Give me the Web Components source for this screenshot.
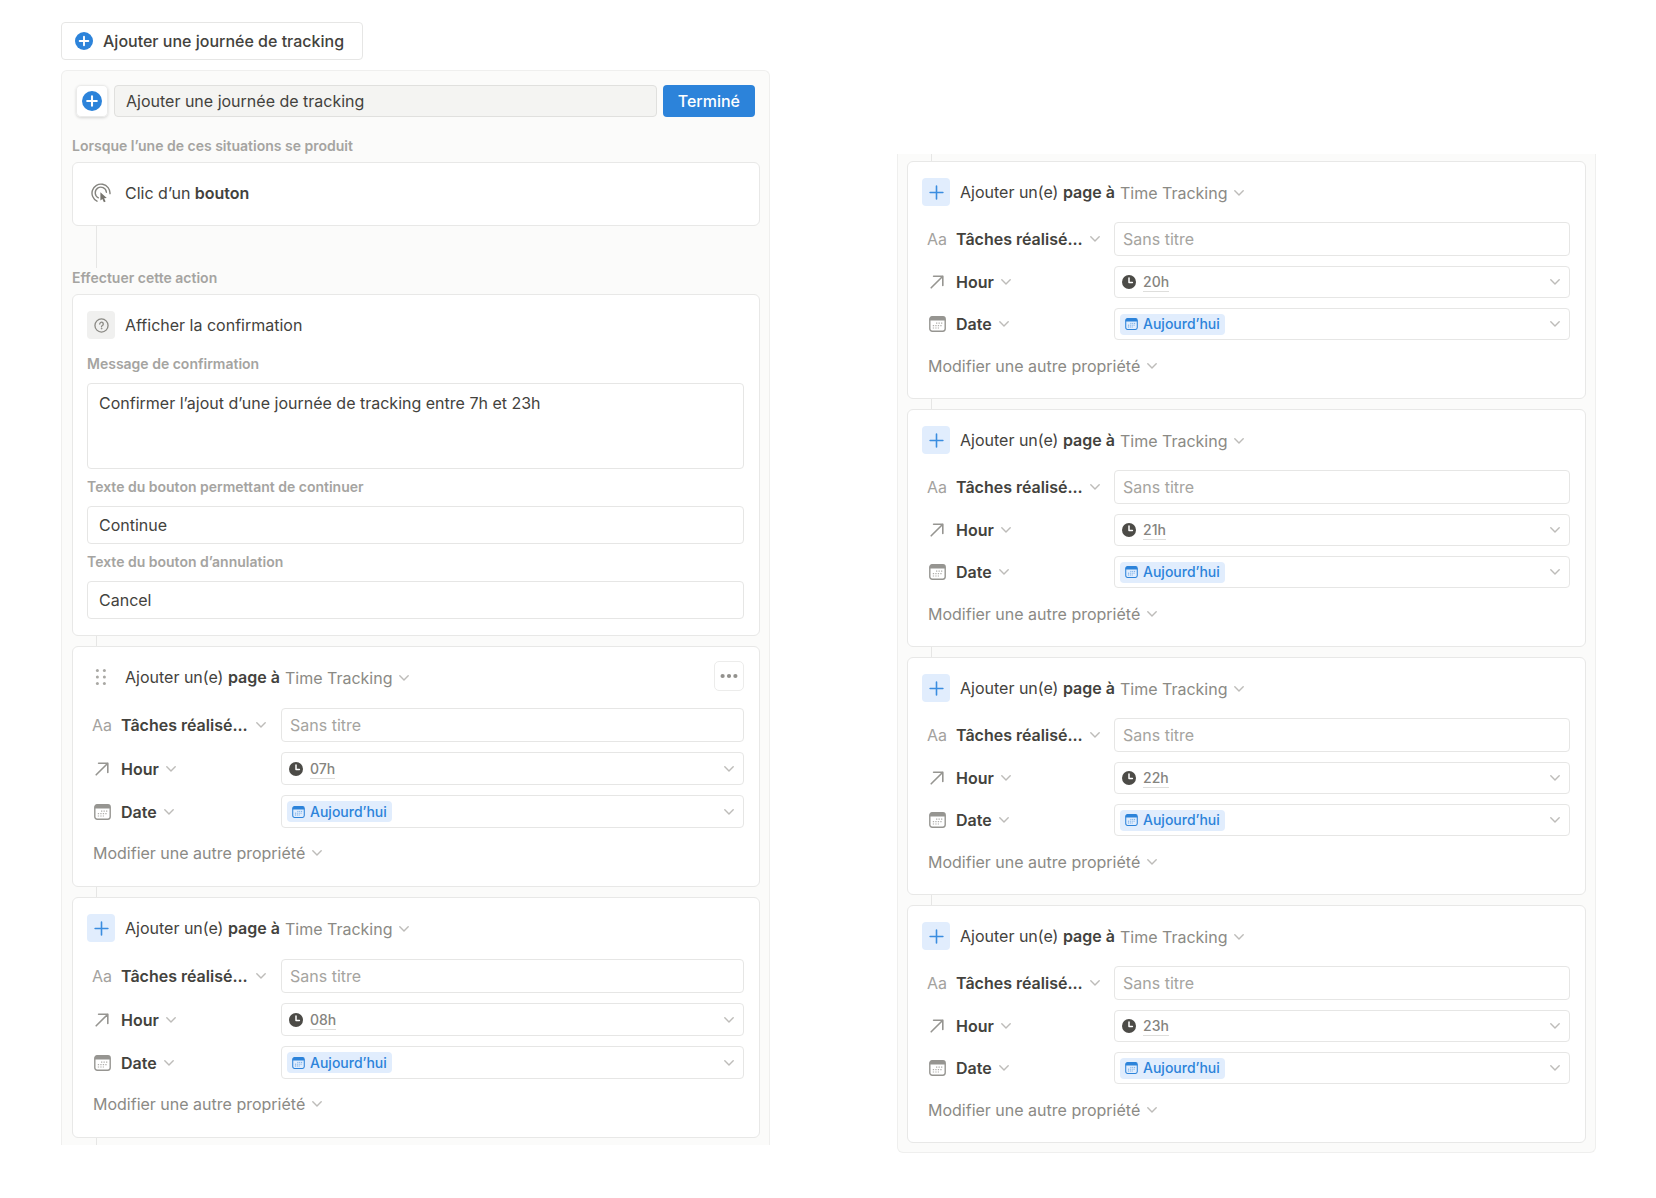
<!DOCTYPE html>
<html lang="fr">
<head>
<meta charset="utf-8">
<title>Ajouter une journée de tracking</title>
<style>
  body {
    margin: 0;
    background: #fff;
    color: #43423d;
    font: 400 16px/24px Inter, "Liberation Sans", sans-serif;
  }
</style>
</head>
<body>
<tracking-board></tracking-board>

<script>
const ICONS = {
  plusDisc: `<svg viewBox="0 0 20 20"><circle cx="10" cy="10" r="10" fill="#2c83da"/><path d="M10 5.2v9.6M5.2 10h9.6" stroke="#fff" stroke-width="2.1" stroke-linecap="round"/></svg>`,
  plus: `<svg viewBox="0 0 16 16" fill="none" stroke="#3a8de0" stroke-width="1.7" stroke-linecap="round"><path d="M8 1.2v13.6M1.2 8h13.6"/></svg>`,
  click: `<svg viewBox="0 0 20 20" fill="none" stroke="#85847f" stroke-width="1.4" stroke-linecap="round"><path d="M6 18.2A9 9 0 1 1 19 10.6"/><path d="M7.4 14.8A5.6 5.6 0 1 1 15.4 9.2"/><path d="M9.4 9.2v8.4l2-1.7 1.5 3.4 1.7-.8-1.5-3.2 2.7-.2z" fill="#77756f" stroke="none"/></svg>`,
  question: `<svg viewBox="0 0 16 16" fill="none" stroke="#8b8a85" stroke-width="1.4" stroke-linecap="round"><circle cx="8" cy="8" r="7"/><path d="M6.1 6.4A1.9 1.9 0 1 1 9 8c-.7.4-1 .7-1 1.3"/><circle cx="8" cy="11.4" r=".4" fill="#8b8a85" stroke-width=".8"/></svg>`,
  drag: `<svg viewBox="0 0 12 18" fill="#a9a8a4"><circle cx="2.4" cy="2.5" r="1.5"/><circle cx="9.4" cy="2.5" r="1.5"/><circle cx="2.4" cy="9" r="1.5"/><circle cx="9.4" cy="9" r="1.5"/><circle cx="2.4" cy="15.5" r="1.5"/><circle cx="9.4" cy="15.5" r="1.5"/></svg>`,
  dots: `<svg viewBox="0 0 18 6" fill="#92918d"><circle cx="2.6" cy="3" r="2.1"/><circle cx="9" cy="3" r="2.1"/><circle cx="15.4" cy="3" r="2.1"/></svg>`,
  chevron: `<svg viewBox="0 0 10 6" fill="none" stroke="#bdbcb9" stroke-width="1.4" stroke-linecap="round" stroke-linejoin="round"><path d="M.8.8 5 5 9.2.8"/></svg>`,
  arrow: `<svg viewBox="0 0 14 14" fill="none" stroke="#969591" stroke-width="1.6" stroke-linecap="round" stroke-linejoin="round"><path d="M1.2 12.8 12.8 1.2M3.6 1.2h9.2v9.2"/></svg>`,
  calendar: `<svg viewBox="0 0 17 16"><rect x=".8" y=".8" width="15.4" height="14.4" rx="2.4" fill="none" stroke="currentColor" stroke-width="1.4"/><path d="M.8 4.6V3A2.4 2.4 0 0 1 3.2.6h10.6A2.4 2.4 0 0 1 16.2 3v1.6z" fill="currentColor"/><path d="M7 7.2h6.4M3.8 9.6h9.6M3.8 12h6.2" stroke="currentColor" stroke-width="1.2" stroke-dasharray="1.3 1.2" opacity=".75"/></svg>`,
  clock: `<svg viewBox="0 0 14 14"><circle cx="7" cy="7" r="7" fill="#4c4b47"/><path d="M7 3v4.4h3.4" fill="none" stroke="#fff" stroke-width="1.5" stroke-linecap="round" stroke-linejoin="round"/></svg>`
};

const BASE = `
  *, *::before, *::after { box-sizing: border-box; }
  button, input, textarea, select { font: inherit; color: inherit; margin: 0; }
  button, select { appearance: none; background: none; border: 0; padding: 0; cursor: pointer; }
`;

class Base extends HTMLElement {
  connectedCallback() {
    if (this.shadowRoot) return;
    this.attachShadow({ mode: "open" }).innerHTML = `<style>${BASE}</style>${this.view()}`;
  }
}

customElements.define("ui-icon", class extends Base {
  view() {
    return `<style>
      :host { display: block; flex: none; width: var(--w, 16px); height: var(--h, var(--w, 16px)); }
      svg { display: block; width: 100%; height: 100%; }
    </style>${ICONS[this.getAttribute("name")]}`;
  }
});

customElements.define("launch-button", class extends Base {
  view() {
    return `<style>
      :host { display: flex; }
      button { display: flex; align-items: center; gap: 10px; height: 38px; padding: 0 18px 0 13px;
        border: 1px solid #e6e6e5; border-radius: 4px; background: #fff; font-weight: 500; }
      ui-icon { --w: 18px; }
    </style><button type="button"><ui-icon name="plusDisc"></ui-icon><slot></slot></button>`;
  }
});

customElements.define("panel-header", class extends Base {
  view() {
    return `<style>
      :host { display: flex; gap: 6px; height: 32px; padding: 0 5px 0 4px; }
      .icon { display: grid; place-items: center; width: 32px; border-radius: 5px; background: #fff;
        box-shadow: 0 0 0 1px #ebebea inset, 0 1px 3px rgba(15,15,15,.16); }
      ui-icon { --w: 20px; }
      input { flex: 1; min-width: 0; padding: 0 11px; border: 1px solid #e0e0de; border-radius: 4px; background: #f4f4f2; }
      .done { padding: 0 15px; border-radius: 4px; background: #2c83da; color: #fff; font-weight: 500; }
    </style>
    <button class="icon" type="button" aria-label="+"><ui-icon name="plusDisc"></ui-icon></button>
    <input type="text" value="${this.getAttribute("value")}" aria-label="${this.getAttribute("value")}">
    <button class="done" type="button">Terminé</button>`;
  }
});

customElements.define("section-label", class extends Base {
  view() {
    return `<style>
      :host { display: block; margin-bottom: 6px; color: #a5a4a1; font-weight: 600; font-size: 14px; line-height: 20px; }
    </style><slot></slot>`;
  }
});

customElements.define("step-link", class extends Base {
  view() {
    return `<style>
      :host { display: block; height: var(--len, 10px); margin-left: 24px; border-left: 1px solid #e6e6e5; }
    </style>`;
  }
});

customElements.define("step-card", class extends Base {
  view() {
    return `<style>
      :host { display: block; padding: 16px 15px var(--card-end, 16px) 14px; background: #fff;
        border: 1px solid #e8e8e7; border-radius: 6px; }
      header { display: flex; align-items: center; gap: 10px; height: 28px; }
      .badge { display: grid; place-items: center; width: 28px; height: 28px; border-radius: 4px; color: #8b8a85; }
      :host([tone="gray"]) .badge { background: #f0f0ef; }
      :host([tone="blue"]) .badge { background: #e1edfd; }
      .badge ui-icon { --w: 15px; }
      ui-icon[name="click"] { --w: 20px; }
      ui-icon[name="drag"] { --w: 12px; --h: 18px; }
      .title { display: flex; align-items: center; flex: 1; }
    </style>
    <header>
      <span class="badge"><ui-icon name="${this.getAttribute("icon")}"></ui-icon></span>
      <span class="title"><slot name="title"></slot></span>
      <slot name="action"></slot>
    </header>
    <slot></slot>`;
  }
});

customElements.define("trigger-step", class extends Base {
  view() {
    return `<style>
      :host { display: block; }
      step-card { --card-end: 18px; }
      b { font-weight: 600; }
    </style><step-card icon="click"><span slot="title">Clic d’un <b>bouton</b></span></step-card>`;
  }
});

customElements.define("confirm-step", class extends Base {
  view() {
    return `<style>
      :host { display: block; }
      form { display: grid; padding-top: 7px; }
      label { margin: 8px 0 9px; color: #a5a4a1; font-weight: 600; font-size: 14px; line-height: 20px; }
      input, textarea { width: 100%; border: 1px solid #e6e6e5; border-radius: 4px; background: #fff; padding: 0 11px; resize: none; outline: 0; }
      input { height: 38px; }
      textarea { height: 86px; padding-top: 7px; display: block; }
    </style>
    <step-card icon="question" tone="gray">
      <span slot="title">Afficher la confirmation</span>
      <form>
        <label for="message">Message de confirmation</label>
        <textarea id="message">Confirmer l’ajout d’une journée de tracking entre 7h et 23h</textarea>
        <label for="ok">Texte du bouton permettant de continuer</label>
        <input id="ok" type="text" value="Continue">
        <label for="no">Texte du bouton d’annulation</label>
        <input id="no" type="text" value="Cancel">
      </form>
    </step-card>`;
  }
});

customElements.define("property-row", class extends Base {
  view() {
    return `<style>
      :host { display: flex; height: var(--row, 33px); }
      .name { display: flex; align-items: center; gap: 9px; flex: none; width: var(--label-col, 194px); padding-left: 5px; }
      .glyph { display: grid; place-items: center; width: 20px; color: #969591; }
      .field { display: flex; flex: 1; min-width: 0; }
    </style>
    <div class="name"><span class="glyph"><slot name="glyph"></slot></span><slot name="name"></slot></div>
    <div class="field"><slot></slot></div>`;
  }
});

customElements.define("menu-button", class extends Base {
  view() {
    return `<style>
      :host { display: flex; }
      button { display: flex; align-items: center; gap: 7px; width: 100%; justify-content: space-between; white-space: nowrap; }
      ui-icon { --w: 10px; --h: 6px; }
    </style><button type="button" aria-haspopup="menu"><span><slot></slot></span><ui-icon name="chevron"></ui-icon></button>`;
  }
});

customElements.define("page-step", class extends Base {
  view() {
    const hour = this.getAttribute("hour");
    const editing = this.hasAttribute("editing");
    return `<style>
      :host { display: block; }
      step-card { --card-end: var(--page-end, 21px); }
      b { font-weight: 600; }
      select { field-sizing: content; }
      .target { display: flex; align-items: center; gap: 6px; margin-left: 5px; padding-top: 2px; color: #8b8a85; --w: 10px; --h: 6px; }
      .title { white-space: nowrap; }
      .more { display: grid; place-items: center; width: 30px; height: 30px; margin-top: -2px; border: 1px solid #ececeb; border-radius: 5px; --w: 18px; --h: 6px; }
      .rows { display: grid; gap: 10px; padding-top: var(--rows-start, 17px); }
      property-row:first-child { --row: 34px; }
      .aa { color: #a3a29e; }
      menu-button { font-weight: 600; }
      menu-button.wide { width: var(--wide, 145px); }
      ui-icon[name="arrow"] { --w: 14px; }
      ui-icon[name="calendar"] { --w: 17px; --h: 16px; }
      input, .pick { flex: 1; min-width: 0; border: 1px solid #e6e6e5; border-radius: 4px; background: #fff; }
      input { padding: 0 8px; }
      input::placeholder { color: #a5a4a0; opacity: 1; }
      .pick { display: flex; align-items: center; justify-content: space-between; padding: 0 9px 0 5px; --w: 10px; --h: 6px; }
      .value { display: flex; align-items: center; font-size: 14px; line-height: 18px; font-weight: 500; }
      .hour { gap: 7px; padding-left: 2px; color: #85847f; }
      .hour select { margin-top: 1px; border-bottom: 1px solid #dededc; }
      .hour ui-icon { --w: 14px; --h: 14px; }
      .day { gap: 5px; height: 21px; padding: 0 5px; border-radius: 4px; background: #e1edfd; color: #2c83da; }
      .day ui-icon[name="calendar"] { --w: 13px; --h: 12px; }
      .other { display: flex; margin: var(--rows-end, 13px) 0 0 6px; height: 24px; color: #8b8a85; }
      .other menu-button { font-weight: 400; }
    </style>
    <step-card icon="${editing ? "drag" : "plus"}" ${editing ? "" : 'tone="blue"'}>
      <span class="title" slot="title">Ajouter un(e) <b>page à</b></span>
      <label class="target" slot="title"><select aria-label="Time Tracking"><option>Time Tracking</option></select><ui-icon name="chevron"></ui-icon></label>
      ${editing ? '<button class="more" slot="action" type="button" aria-label="…"><ui-icon name="dots"></ui-icon></button>' : ""}
      <div class="rows">
        <property-row>
          <span class="aa" slot="glyph">Aa</span>
          <menu-button class="wide" slot="name">Tâches réalisé...</menu-button>
          <input type="text" placeholder="Sans titre" aria-label="Sans titre">
        </property-row>
        <property-row>
          <ui-icon slot="glyph" name="arrow"></ui-icon>
          <menu-button slot="name">Hour</menu-button>
          <label class="pick"><span class="value hour"><ui-icon name="clock"></ui-icon><select aria-label="Hour"><option>${hour}</option></select></span><ui-icon name="chevron"></ui-icon></label>
        </property-row>
        <property-row>
          <ui-icon slot="glyph" name="calendar"></ui-icon>
          <menu-button slot="name">Date</menu-button>
          <label class="pick"><span class="value day"><ui-icon name="calendar"></ui-icon><select aria-label="Date"><option>Aujourd’hui</option></select></span><ui-icon name="chevron"></ui-icon></label>
        </property-row>
      </div>
      <div class="other"><menu-button>Modifier une autre propriété</menu-button></div>
    </step-card>`;
  }
});

customElements.define("automation-panel", class extends Base {
  view() {
    return `<style>
      :host { display: block; padding: 14px 9px 10px 10px; background: #fbfbfa; border: 1px solid #efefee; border-radius: 6px; }
      :host([cut="end"]) { padding-bottom: 0; border-bottom: 0; border-radius: 6px 6px 0 0; }
      :host([cut="start"]) { padding: 0 9px 9px; border-top: 0; border-radius: 0 0 6px 6px; }
    </style><slot></slot>`;
  }
});

customElements.define("tracking-board", class extends Base {
  view() {
    return `<style>
      :host { display: block; }
      main { display: grid; grid-template-columns: minmax(0, 709fr) minmax(0, 699fr); column-gap: 127px;
        align-items: start; padding: 22px 60px 44px 61px; }
      .first { display: grid; gap: 10px; }
      .second { margin-top: 132px; --row: 32px; --rows-start: 16px; --rows-end: 14px; --page-end: 20px; --label-col: 192px; --wide: 142px; }
      section-label.when { margin-top: 19px; }
      .long { --len: 42px; }
      .stub { --len: 7px; }
    </style>
    <main>
      <div class="first">
        <launch-button>Ajouter une journée de tracking</launch-button>
        <automation-panel cut="end">
          <panel-header value="Ajouter une journée de tracking"></panel-header>
          <section-label class="when">Lorsque l’une de ces situations se produit</section-label>
          <trigger-step></trigger-step>
          <step-link class="long"></step-link>
          <section-label>Effectuer cette action</section-label>
          <confirm-step></confirm-step>
          <step-link></step-link>
          <page-step hour="07h" editing></page-step>
          <step-link></step-link>
          <page-step hour="08h"></page-step>
          <step-link class="stub"></step-link>
        </automation-panel>
      </div>
      <div class="second">
        <automation-panel cut="start">
          <step-link class="stub"></step-link>
          <page-step hour="20h"></page-step>
          <step-link></step-link>
          <page-step hour="21h"></page-step>
          <step-link></step-link>
          <page-step hour="22h"></page-step>
          <step-link></step-link>
          <page-step hour="23h"></page-step>
        </automation-panel>
      </div>
    </main>`;
  }
});
</script>
</body>
</html>
